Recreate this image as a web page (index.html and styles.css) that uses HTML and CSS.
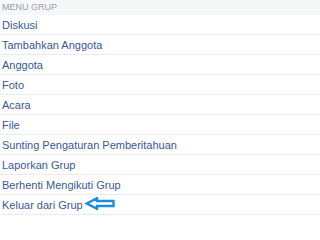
FILE: index.html
```html
<!DOCTYPE html>
<html lang="id">
<head>
<meta charset="utf-8">
<link rel="stylesheet" href="styles.css">
</head>
<body>
<div class="menu">
  <div class="menu-header">MENU GRUP</div>
  <ul class="menu-list">
    <li class="menu-item">Diskusi</li>
    <li class="menu-item">Tambahkan Anggota</li>
    <li class="menu-item">Anggota</li>
    <li class="menu-item">Foto</li>
    <li class="menu-item">Acara</li>
    <li class="menu-item">File</li>
    <li class="menu-item">Sunting Pengaturan Pemberitahuan</li>
    <li class="menu-item">Laporkan Grup</li>
    <li class="menu-item">Berhenti Mengikuti Grup</li>
    <li class="menu-item">Keluar dari Grup<svg class="arrow" width="30" height="13" viewBox="0 0 30 13"><path d="M1.8 6.5 L12 1.2 L12 4 L28.5 4 L28.5 9 L12 9 L12 11.8 Z" fill="#fff" stroke="#1a8de0" stroke-width="2.4" stroke-linejoin="miter"/></svg></li>
  </ul>
</div>
</body>
</html>
```
FILE: styles.css
```css
html, body {
  margin: 0;
  padding: 0;
  background: #fff;
}
.menu {
  width: 320px;
  font-family: "Liberation Sans", Arial, sans-serif;
}
.menu-header {
  height: 15px;
  line-height: 15px;
  background: #f6f7f9;
  color: #9a9ea6;
  font-size: 9px;
  padding-left: 2px;
}
.menu-list {
  list-style: none;
  margin: 0;
  padding: 0;
}
.menu-item {
  height: 19px;
  border-bottom: 1px solid #e9ebee;
  color: #365899;
  font-size: 11px;
  padding-left: 2px;
  display: flex;
  align-items: center;
}
.arrow {
  margin-left: 2px;
  margin-top: -3px;
}
```
